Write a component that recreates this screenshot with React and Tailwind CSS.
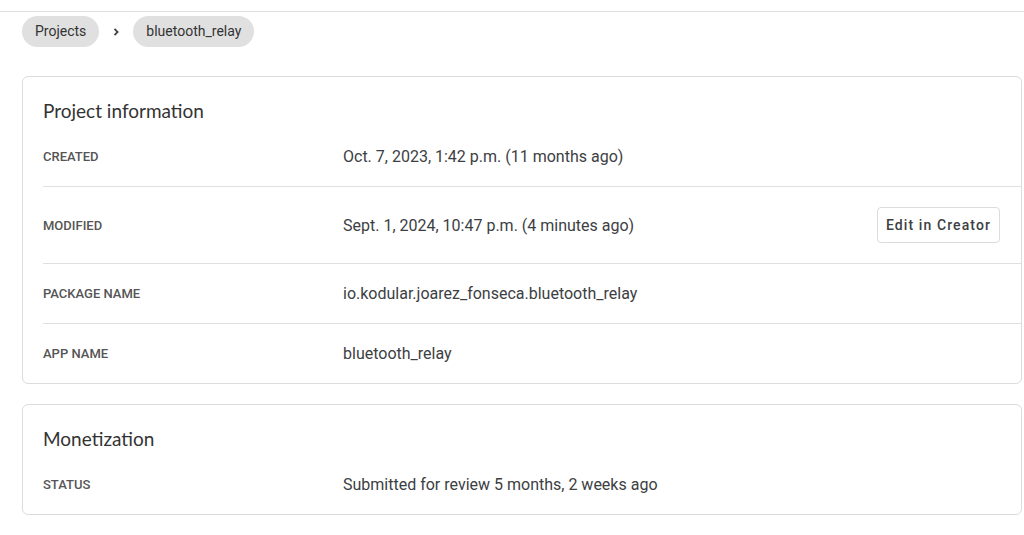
import React from 'react';

const Row = ({ label, value, action, first }) => (
    <div className="pl-[20px]">
        <div className={`flex items-center py-[20px] pr-[21px] ${first ? '' : 'border-t border-[#e0e0e0]'}`}>
            <div className="w-[300px] shrink-0 text-[13px] font-medium uppercase leading-[19px] text-[#555]">
                {label}
            </div>
            <div className="flex-1 text-[16px] leading-[19px] text-[#3c4043]">{value}</div>
            {action}
        </div>
    </div>
);

const Card = ({ title, children }) => (
    <div className="rounded-md border border-[#dcdcdc] bg-white">
        <h2
            className="px-[20px] pt-[18px] text-[19px] leading-[32px] text-[#333]"
            style={{ fontFamily: 'Lato, "Noto Sans", sans-serif' }}
        >
            {title}
        </h2>
        <div>{children}</div>
    </div>
);

const App = () => {
    return (
        <div className="min-h-[535px] bg-white" style={{ fontFamily: 'Roboto, "Liberation Sans", sans-serif' }}>
            <div className="h-[12px] border-b border-[#e0e0e0]" />
            <div className="flex items-center gap-[12px] pl-[22px] pt-[4px]">
                <span className="rounded-full bg-[#e0e0e0] px-[13px] py-[6px] text-[14px] leading-[19px] text-[#333]">
                    Projects
                </span>
                <svg width="10" height="10" viewBox="0 0 10 10" className="text-[#444]">
                    <path d="M3.5 1.8 L6.6 5 L3.5 8.2" fill="none" stroke="currentColor" strokeWidth="1.8" />
                </svg>
                <span className="rounded-full bg-[#e0e0e0] px-[13px] py-[6px] text-[14px] leading-[19px] text-[#333]">
                    bluetooth_relay
                </span>
            </div>
            <div className="flex flex-col gap-[20px] pl-[22px] pr-[2px] pt-[29px]">
                <Card title="Project information">
                    <Row first label="Created" value="Oct. 7, 2023, 1:42 p.m. (11 months ago)" />
                    <Row
                        label="Modified"
                        value="Sept. 1, 2024, 10:47 p.m. (4 minutes ago)"
                        action={
                            <button className="h-[36px] rounded-[4px] border border-[#dadce0] bg-white px-[8px] text-[14px] font-medium tracking-[1.1px] text-[#3c4043]">
                                Edit in Creator
                            </button>
                        }
                    />
                    <Row label="Package name" value="io.kodular.joarez_fonseca.bluetooth_relay" />
                    <Row label="App name" value="bluetooth_relay" />
                </Card>
                <Card title="Monetization">
                    <Row first label="Status" value="Submitted for review 5 months, 2 weeks ago" />
                </Card>
            </div>
        </div>
    );
};

export default App;
